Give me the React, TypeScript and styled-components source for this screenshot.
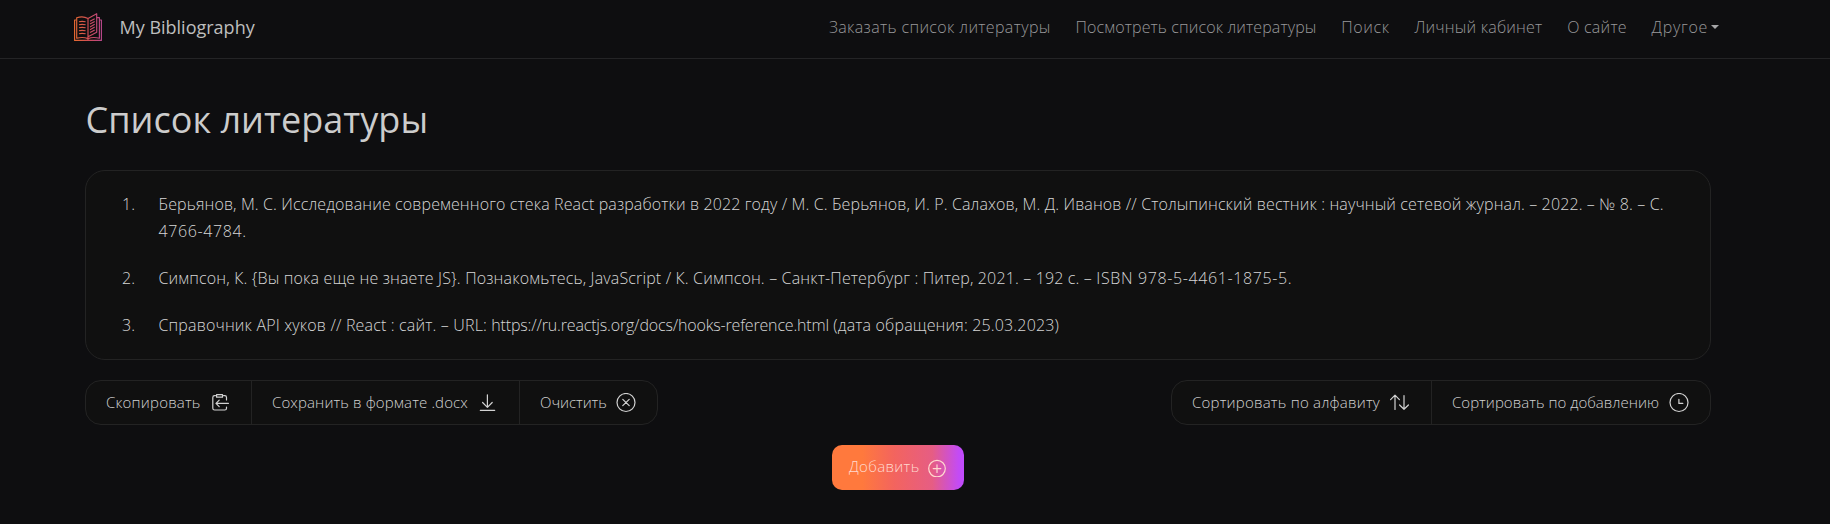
import React from 'react';
import styled, { createGlobalStyle } from 'styled-components';

const GlobalStyle = createGlobalStyle`
  * { box-sizing: border-box; }
  body {
    margin: 0;
    min-height: 100vh;
    background: #0e0e10;
    color: #d6d6d6;
    font: 300 16px/27px 'Open Sans', 'Noto Sans', sans-serif;
  }
`;

const Header = styled.header`
  display: flex;
  align-items: center;
  justify-content: space-between;
  height: 59px;
  padding: 0 111px 4px 74px;
  border-bottom: 1px solid #242426;
`;

const Brand = styled.a`
  display: flex;
  align-items: center;
  gap: 17.5px;
  color: #bebebe;
  font-size: 18px;
  font-weight: 400;
  letter-spacing: 0;
  white-space: nowrap;
`;

const Nav = styled.nav`
  display: flex;
  align-items: center;
  gap: 24.8px;
`;

const NavLink = styled.a<{ $tracking: number }>`
  display: flex;
  align-items: center;
  color: #98989a;
  letter-spacing: ${(p) => p.$tracking}px;
  white-space: nowrap;
`;

const Caret = styled.i`
  margin-left: 3px;
  border: 4px solid transparent;
  border-top-color: #a5a5a7;
  border-bottom: 0;
`;

const Main = styled.main`
  width: 1626px;
  margin: 0 0 0 85px;
`;

const Title = styled.h1`
  margin: 0;
  padding: 36px 0 0 0.5px;
  height: 111px;
  color: #cccccc;
  font-size: 36px;
  font-weight: 400;
  line-height: 50px;
  letter-spacing: 0.03px;
`;

const Panel = styled.ol`
  display: flex;
  flex-direction: column;
  gap: 20px;
  margin: 0;
  padding: 20px 40px 20px 36px;
  list-style: none;
  background: #101010;
  border: 1px solid #232323;
  border-radius: 20px;
`;

const Entry = styled.li`
  display: grid;
  grid-template-columns: 36.5px 1fr;
`;

const Reference = styled.span<{ $tracking: number }>`
  letter-spacing: ${(p) => p.$tracking}px;
`;

const Digits = styled.span`
  letter-spacing: 0.62px;
`;

const Url = styled.span`
  letter-spacing: -0.17px;
`;

const Toolbar = styled.div`
  display: flex;
  justify-content: space-between;
  margin-top: 20px;
`;

const ButtonGroup = styled.div`
  display: flex;
  height: 45px;
  background: #101010;
  border: 1px solid #232323;
  border-radius: 16px;
`;

const ToolButton = styled.button<{ $tracking: number; $width: number }>`
  display: flex;
  align-items: center;
  justify-content: space-between;
  width: ${(p) => p.$width}px;
  padding: 0 21px 0 20px;
  background: none;
  border: 0;
  color: #d2d2d2;
  font: inherit;
  font-size: 15px;
  letter-spacing: ${(p) => p.$tracking}px;
  white-space: nowrap;

  & + & { border-left: 1px solid #232323; }
`;

const AddRow = styled.div`
  display: flex;
  justify-content: center;
  margin-top: 20px;
`;

const AddButton = styled.button`
  display: flex;
  align-items: center;
  justify-content: space-between;
  width: 132px;
  height: 45px;
  padding: 0 18.5px 0 17px;
  border: 0;
  border-radius: 10px;
  background: linear-gradient(90deg, #ff793d 0%, #ff793d 23%, #f3645e 47%, #e65d84 76%, #c34bf5 96%, #c04bff 100%);
  color: #ffd9cf;
  font: inherit;
  font-size: 15px;
  letter-spacing: 0.33px;
`;

const AddLabel = styled.span`
  padding-bottom: 2px;
`;

const Glyph = styled.svg`
  flex: none;
  fill: none;
  stroke: currentColor;
  stroke-width: 1.2;
  stroke-linecap: round;
  stroke-linejoin: round;
`;

const paths = {
  paste:
    'M5.5 2.6H4.6Q2.8 2.6 2.8 4.4V15.2Q2.8 17 4.6 17H14.8Q16.5 17 16.5 15.2V14M16.5 7V4.4Q16.5 2.6 14.8 2.6H13.6M6.6 1.6H12.5V4.2H6.6ZM18.4 10.4H6M9.2 7.2 6 10.4 9.2 13.6',
  download: 'M2.3 17.3H16.7M9.4 1.8V14.3M4.6 9.5 9.4 14.3 14.2 9.5',
  clear: 'M19 9.5A9 9 0 1 1 1 9.5A9 9 0 1 1 19 9.5M6.8 6.3 13.2 12.7M13.2 6.3 6.8 12.7',
  sort: 'M5 16.5V2.2M.6 6.6 5 2.2 9.4 6.6M14 2.5V16.3M9.6 12 14 16.3 18.4 12',
  clock: 'M19 9.5A9 9 0 1 1 1 9.5A9 9 0 1 1 19 9.5M9.9 6.3V10.4H13.8',
};

type IconName = keyof typeof paths;

const Icon = ({ name }: { name: IconName }) => (
  <Glyph width="20" height="20" viewBox="0 0 20 20">
    <path d={paths[name]} />
  </Glyph>
);

const Logo = () => (
  <svg width="28" height="28" viewBox="0 0 28 28" fill="none" stroke="url(#logo)" strokeWidth="1.15" strokeLinejoin="round">
    <defs>
      <linearGradient id="logo" gradientUnits="userSpaceOnUse" x1="0" y1="0" x2="28" y2="0">
        <stop offset="0" stopColor="#e66a30" />
        <stop offset="0.5" stopColor="#d24e54" />
        <stop offset="1" stopColor="#b8478c" />
      </linearGradient>
    </defs>
    <path d="M2 7H.6V27.4H27.4V7H26" />
    <path d="M14 5.5Q9 2.6 2.7 4.8V25.2Q9 23.6 14 25.6V5.5L22.7.7V19.2L14 23.8" />
    <path d="M22.7 4.6H25.4V25.2Q19 23.6 14 25.6V27.4" />
    <path d="M5 8.8Q8 7.8 11.6 8.8M5 11.8Q8 10.8 11.6 11.8M5 14.8Q8 13.8 11.6 14.8M5 17.8Q8 16.8 11.6 17.8M5 20.8Q8 19.8 11.6 20.8" />
    <path d="M16 8.3 20.7 5.7M16 11.1 20.7 8.5M16 13.9 20.7 11.3M16 16.7 20.7 14.1M16 19.5 20.7 16.9" />
  </svg>
);

const links: [string, number][] = [
  ['Заказать список литературы', 0.36],
  ['Посмотреть список литературы', 0.12],
  ['Поиск', 0.6],
  ['Личный кабинет', 0.2],
  ['О сайте', 0.22],
];

const leftTools: [string, IconName, number, number][] = [
  ['Скопировать', 'paste', 0.2, 165],
  ['Сохранить в формате .docx', 'download', 0.13, 268],
  ['Очистить', 'clear', -0.06, 138],
];

const rightTools: [string, IconName, number, number][] = [
  ['Сортировать по алфавиту', 'sort', 0.22, 259],
  ['Сортировать по добавлению', 'clock', 0.03, 279],
];

const Tools = ({ items }: { items: [string, IconName, number, number][] }) => (
  <ButtonGroup>
    {items.map(([label, icon, tracking, width]) => (
      <ToolButton key={label} $tracking={tracking} $width={width}>
        {label}
        <Icon name={icon} />
      </ToolButton>
    ))}
  </ButtonGroup>
);

export default function App() {
  return (
    <>
      <GlobalStyle />
      <Header>
        <Brand>
          <Logo />
          My Bibliography
        </Brand>
        <Nav>
          {links.map(([label, tracking]) => (
            <NavLink key={label} $tracking={tracking}>{label}</NavLink>
          ))}
          <NavLink $tracking={0.7}>
            Другое
            <Caret />
          </NavLink>
        </Nav>
      </Header>
      <Main>
        <Title>Список литературы</Title>
        <Panel>
          <Entry>
            <span>1.</span>
            <Reference $tracking={0.12}>
              Берьянов, М. С. Исследование современного стека React разработки в 2022 году / М. С. Берьянов, И. Р. Салахов, М. Д. Иванов // Столыпинский вестник : научный сетевой журнал. – 2022. – № 8. – С. <Digits>4766-4784.</Digits>
            </Reference>
          </Entry>
          <Entry>
            <span>2.</span>
            <Reference $tracking={0.15}>
              Симпсон, К. {'{Вы пока еще не знаете JS}'}. Познакомьтесь, JavaScript / К. Симпсон. – Санкт-Петербург : Питер, 2021. – 192 с. – <Digits>ISBN 978-5-4461-1875-5.</Digits>
            </Reference>
          </Entry>
          <Entry>
            <span>3.</span>
            <Reference $tracking={0.16}>
              Справочник API хуков // React : сайт. – URL: <Url>https://ru.reactjs.org/docs/hooks-reference.html</Url> (дата обращения: 25.03.2023)
            </Reference>
          </Entry>
        </Panel>
        <Toolbar>
          <Tools items={leftTools} />
          <Tools items={rightTools} />
        </Toolbar>
        <AddRow>
          <AddButton>
            <AddLabel>Добавить</AddLabel>
            <Glyph width="18" height="18" viewBox="0 0 18 18">
              <path d="M17.3 9.6A8.3 8.3 0 1 1 .7 9.6A8.3 8.3 0 1 1 17.3 9.6M9 5.8V13.4M5.2 9.6H12.8" />
            </Glyph>
          </AddButton>
        </AddRow>
      </Main>
    </>
  );
}
